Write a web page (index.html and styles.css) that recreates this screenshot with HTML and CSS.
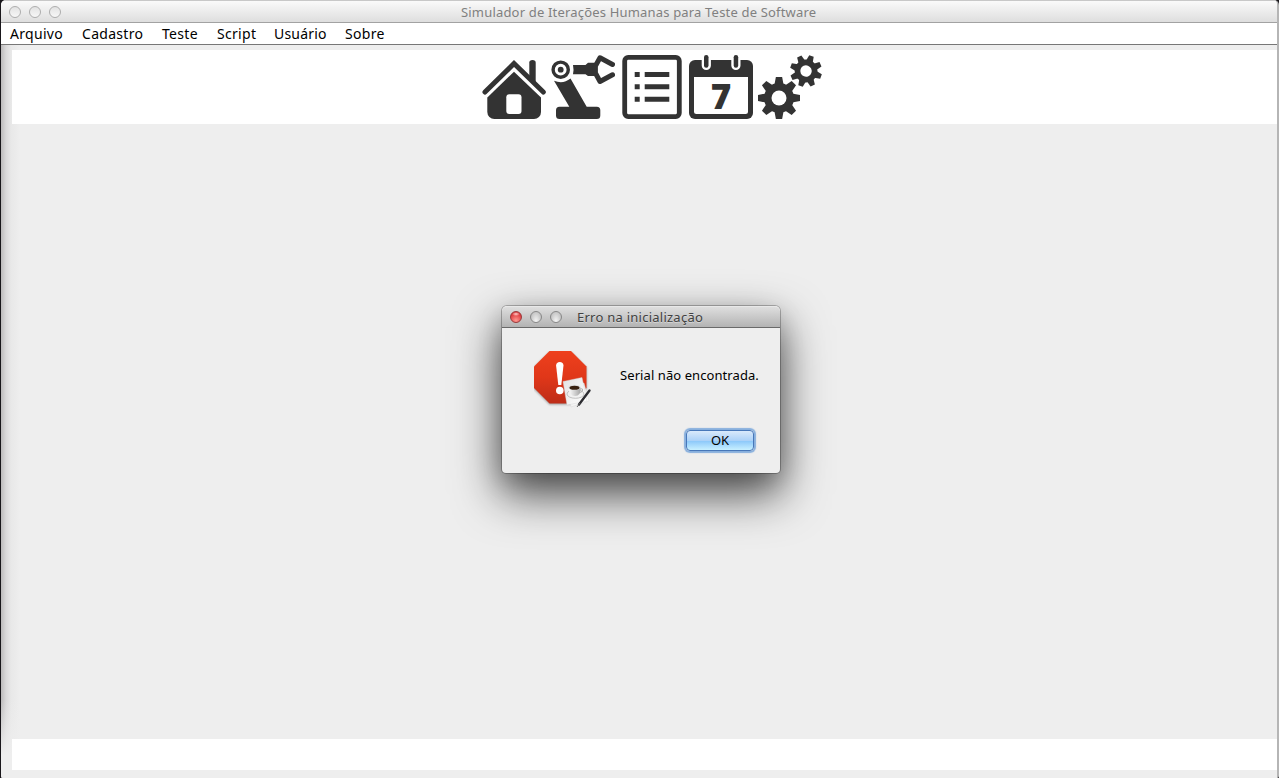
FILE: index.html
```html
<!DOCTYPE html>
<html lang="pt-BR">
<head>
<meta charset="utf-8">
<title>Simulador de Iterações Humanas para Teste de Software</title>
<link rel="stylesheet" href="styles.css">
</head>
<body>
<div class="window">
  <header class="titlebar">
    <div class="lights"><i></i><i></i><i></i></div>
    <h1 class="window-title">Simulador de Iterações Humanas para Teste de Software</h1>
  </header>
  <nav class="menubar">
    <span class="arquivo">Arquivo</span><span class="cadastro">Cadastro</span><span class="teste">Teste</span><span class="script">Script</span><span class="usuario">Usuário</span><span class="sobre">Sobre</span>
  </nav>
  <main class="content">
    <div class="toolbar">
      <svg class="tool" viewBox="0 0 64 64">
        <path d="M47.300 21V7.500a3.200 2.500 0 0 1 6.400 0V28z"/>
        <path class="roof" d="M3 37L32 8.500 61.300 37"/>
        <path d="M32 16.700L59 42.500V57a7 7 0 0 1-7 7H12.300a7 7 0 0 1-7-7V42.500z"/>
        <rect class="blank" x="24.300" y="39.300" width="15.200" height="19.700" rx="3"/>
      </svg>
      <svg class="tool" viewBox="0 0 64 64">
        <circle class="ring" cx="9.700" cy="14.700" r="7.600"/>
        <circle cx="9.700" cy="14.700" r="2.900"/>
        <path d="M22 10H34.500L37 7.700H45V21H37L34.500 19.300H22Q23 14.700 22 10z"/>
        <path class="claw" d="M61.500 9.500L49 2.800 44.400 11V18L49 26.500 61.500 19.800"/>
        <path d="M3 25.700Q12 29.500 19.500 23.500L35.700 51.700H45.800a3.500 3.500 0 0 1 3.500 3.500V60.500a3.500 3.500 0 0 1-3.500 3.500H8.500A3.500 3.500 0 0 1 5 60.500V55.200a3.500 3.500 0 0 1 3.500-3.500H18.300z"/>
      </svg>
      <svg class="tool" viewBox="0 0 64 64">
        <rect class="frame" x="4.700" y="2.400" width="54.600" height="59.200" rx="3.500"/>
        <path d="M14.700 17h5v5h-5zM24.700 17h24.600v5H24.700zM14.700 29.300h5v5h-5zM24.700 29.300h24.600v5H24.700zM14.700 41.700h5v5h-5zM24.700 41.700h24.600v5H24.700z"/>
      </svg>
      <svg class="tool" viewBox="0 0 64 64">
        <rect y="5" width="64" height="59" rx="6"/>
        <path class="blank" d="M5 22H59V56.500a2.500 2.500 0 0 1-2.500 2.500H7.500A2.500 2.500 0 0 1 5 56.500zM12.700 4V10.500a4.600 4.600 0 0 0 9.200 0V4zM42.300 4V10.500a4.600 4.600 0 0 0 9.200 0V4z"/>
        <rect x="15" y="0" width="4.500" height="12.700" rx="2.200"/>
        <rect x="44.700" y="0" width="4.500" height="12.700" rx="2.200"/>
        <text class="day" x="32" y="54.300" text-anchor="middle">7</text>
      </svg>
      <svg class="tool" viewBox="0 0 64 64">
        <defs>
          <path id="tooth" d="M-4.600-13L-3.100-21H3.100L4.600-13z"/>
          <g id="gear">
            <use href="#tooth"/><use href="#tooth" transform="rotate(45)"/><use href="#tooth" transform="rotate(90)"/><use href="#tooth" transform="rotate(135)"/><use href="#tooth" transform="rotate(180)"/><use href="#tooth" transform="rotate(225)"/><use href="#tooth" transform="rotate(270)"/><use href="#tooth" transform="rotate(315)"/>
            <circle r="15"/><circle class="blank" r="7.500"/>
          </g>
        </defs>
        <use href="#gear" transform="translate(21 43)"/>
        <use href="#gear" transform="translate(48 16) rotate(20) scale(.76)"/>
      </svg>
    </div>
    <div class="statusbar"></div>
  </main>
</div>

<section class="dialog" role="alertdialog">
  <header class="dialog-bar">
    <div class="lights active"><i class="close"></i><i></i><i></i></div>
    <h2 class="dialog-title">Erro na inicialização</h2>
  </header>
  <div class="dialog-body">
    <svg class="stop" viewBox="0 0 60 60">
      <defs>
        <linearGradient id="red" x2="0" y2="1"><stop stop-color="#ee401d"/><stop offset=".5" stop-color="#e03719"/><stop offset="1" stop-color="#bd2d18"/></linearGradient>
        <linearGradient id="paper" x2="1" y2="1"><stop stop-color="#e2e2e2"/><stop offset="1" stop-color="#fff"/></linearGradient>
        <linearGradient id="cup" x2="1" y2="0"><stop stop-color="#fff"/><stop offset="1" stop-color="#a5a5a5"/></linearGradient>
      </defs>
      <path class="octagon" d="M15.500 0H37L52.500 15.500V37L37 52.500H15.500L0 37V15.500z"/>
      <path class="mark" d="M22.100 14.500Q22.300 11 25.800 11T29.500 14.500L27.300 34H24.300z"/>
      <circle class="mark" cx="25.800" cy="39.500" r="3.800"/>
      <path class="sheet" d="M33 35L50 32 55 50 37 56z"/>
      <path class="sheet" d="M29 30.500L48 26.500 53 50 33 54z"/>
      <ellipse class="saucer" cx="41.500" cy="43" rx="8.500" ry="4.300"/>
      <path class="cup" d="M34.500 36.500Q35 45 41 45T46.500 36.500z"/>
      <path class="handle" d="M46 38Q50 37 48 40.500L45 42"/>
      <ellipse class="rim" cx="40.500" cy="36.500" rx="6.200" ry="2.800"/>
      <ellipse class="coffee" cx="40.500" cy="36.700" rx="5" ry="2"/>
      <path class="pen" d="M55.500 39.500L45 53.500"/>
      <path class="nib" d="M46 52L43 56"/>
    </svg>
    <p class="message">Serial não encontrada.</p>
    <button class="ok">OK</button>
  </div>
</section>
</body>
</html>
```
FILE: styles.css
```css
* { box-sizing: border-box; }
body {
  margin: 0;
  height: 778px;
  overflow: hidden;
  background: #19171b;
  font-family: "Noto Sans", "Open Sans", sans-serif;
}
.window {
  display: flex;
  flex-direction: column;
  height: 778px;
  margin-left: 1px;
  border-right: 2px solid #b5b5b5;
  border-radius: 5px 5px 2px 2px;
  background: #eee;
  overflow: hidden;
}
.titlebar {
  display: flex;
  align-items: center;
  height: 23px;
  padding-left: 8px;
  border-top: 1px solid #c8c8c8;
  border-bottom: 1px solid #a2a2a2;
  background: linear-gradient(#fafafa, #dedede);
}
.lights { display: flex; gap: 8px; width: 52px; padding-top: 1px; }
.lights i {
  width: 12px;
  height: 12px;
  border: 1px solid #adadad;
  border-radius: 50%;
  background: linear-gradient(#e2e2e2, #f7f7f7);
}
.lights.active { padding-top: 0; }
.lights.active i {
  border-color: #888;
  background: radial-gradient(ellipse at 50% 95%, #f6f6f6, #c4c4c4 75%);
}
.lights.active .close {
  border-color: #99393a;
  background: radial-gradient(ellipse 4px 2px at 50% 20%, #ffd5d0, transparent), radial-gradient(circle at 50% 85%, #ff9890, #dc3438 75%);
}
.window-title {
  margin: 0 0 0 400px;
  font-size: 13px;
  line-height: 20px;
  font-weight: 400;
  color: #808080;
  white-space: nowrap;
  letter-spacing: .18px;
}
.menubar {
  display: flex;
  height: 22px;
  padding-left: 9px;
  border-bottom: 1px solid #777;
  background: #fff;
  font-size: 14px;
  line-height: 21px;
  color: #000;
  letter-spacing: .3px;
}
.arquivo { width: 72px; }
.cadastro { width: 80px; }
.teste { width: 55px; }
.script { width: 57px; }
.usuario { width: 71px; letter-spacing: .2px; }
.content {
  flex: 1;
  display: flex;
  flex-direction: column;
  justify-content: space-between;
  padding: 5px 0 8px 11px;
  background: linear-gradient(transparent 655px, #eee 710px), linear-gradient(90deg, #bdbbbc, #dad9da 5px, #e8e8e8 10px, #eee 19px);
}
.toolbar {
  display: flex;
  gap: 5px;
  height: 74px;
  padding: 5px 0 0 470px;
  background: #fff;
}
.tool { width: 64px; height: 64px; fill: #333; }
.blank { fill: #fff; }
.roof { fill: none; stroke: #333; stroke-width: 5; stroke-linecap: round; }
.ring { fill: none; stroke: #333; stroke-width: 3.4; }
.claw { fill: none; stroke: #333; stroke-width: 5; stroke-linecap: round; stroke-linejoin: round; }
.frame { fill: none; stroke: #333; stroke-width: 4.8; }
.day { font: 800 35px "Open Sans", sans-serif; }
.statusbar { height: 31px; background: #fff; }

.dialog {
  position: absolute;
  left: 502px;
  top: 306px;
  width: 278px;
  height: 167px;
  border-radius: 5px 5px 4px 4px;
  background: #eee;
  box-shadow: 0 0 0 1px rgba(0, 0, 0, .25), 0 20px 46px 2px rgba(0, 0, 0, .68), 0 8px 24px rgba(0, 0, 0, .15);
}
.dialog-bar {
  display: flex;
  align-items: center;
  height: 22px;
  padding-left: 8px;
  border-top: 1px solid #e8e8e8;
  border-bottom: 1px solid #696969;
  border-radius: 5px 5px 0 0;
  background: linear-gradient(#dedede, #b3b3b3);
}
.dialog-title {
  margin: 0 0 0 15px;
  font-size: 13px;
  line-height: 20px;
  font-weight: 400;
  color: #414141;
  letter-spacing: .25px;
  text-shadow: 0 1px rgba(255, 255, 255, .4);
}
.dialog-body {
  display: grid;
  grid-template-columns: 86px auto;
  grid-template-rows: 79px 22px;
  padding: 23px 26px 0 32px;
}
.stop { width: 60px; height: 60px; }
.octagon { fill: url(#red); filter: drop-shadow(0 1px 1px rgba(0, 0, 0, .35)); }
.mark { fill: #fff; }
.sheet { fill: url(#paper); stroke: #d4d4d4; stroke-width: .4; }
.saucer { fill: #f1f1f1; stroke: #aaa; stroke-width: .7; }
.cup { fill: url(#cup); }
.handle { fill: none; stroke: #aaa; }
.rim { fill: #ddd; }
.coffee { fill: #38200f; }
.pen { stroke: #2c2c31; stroke-width: 2.4; stroke-linecap: round; }
.nib { stroke: #666; }
.message { margin: 14px 0 0; font-size: 13px; line-height: 20px; color: #000; white-space: nowrap; letter-spacing: .08px; }
.ok {
  grid-column: 2;
  width: 68px;
  height: 21px;
  margin-left: 66px;
  padding: 0 0 1px;
  border: 1px solid #4777b9;
  border-radius: 4px;
  background: linear-gradient(#d9e9fb, #acd2f8 50%, #8bc7fa 52%, #c8f0ff);
  box-shadow: 0 0 1px 2px rgba(100, 154, 215, .75);
  font: 13px/17px "Noto Sans", "Open Sans", sans-serif;
  color: #000;
}
```
